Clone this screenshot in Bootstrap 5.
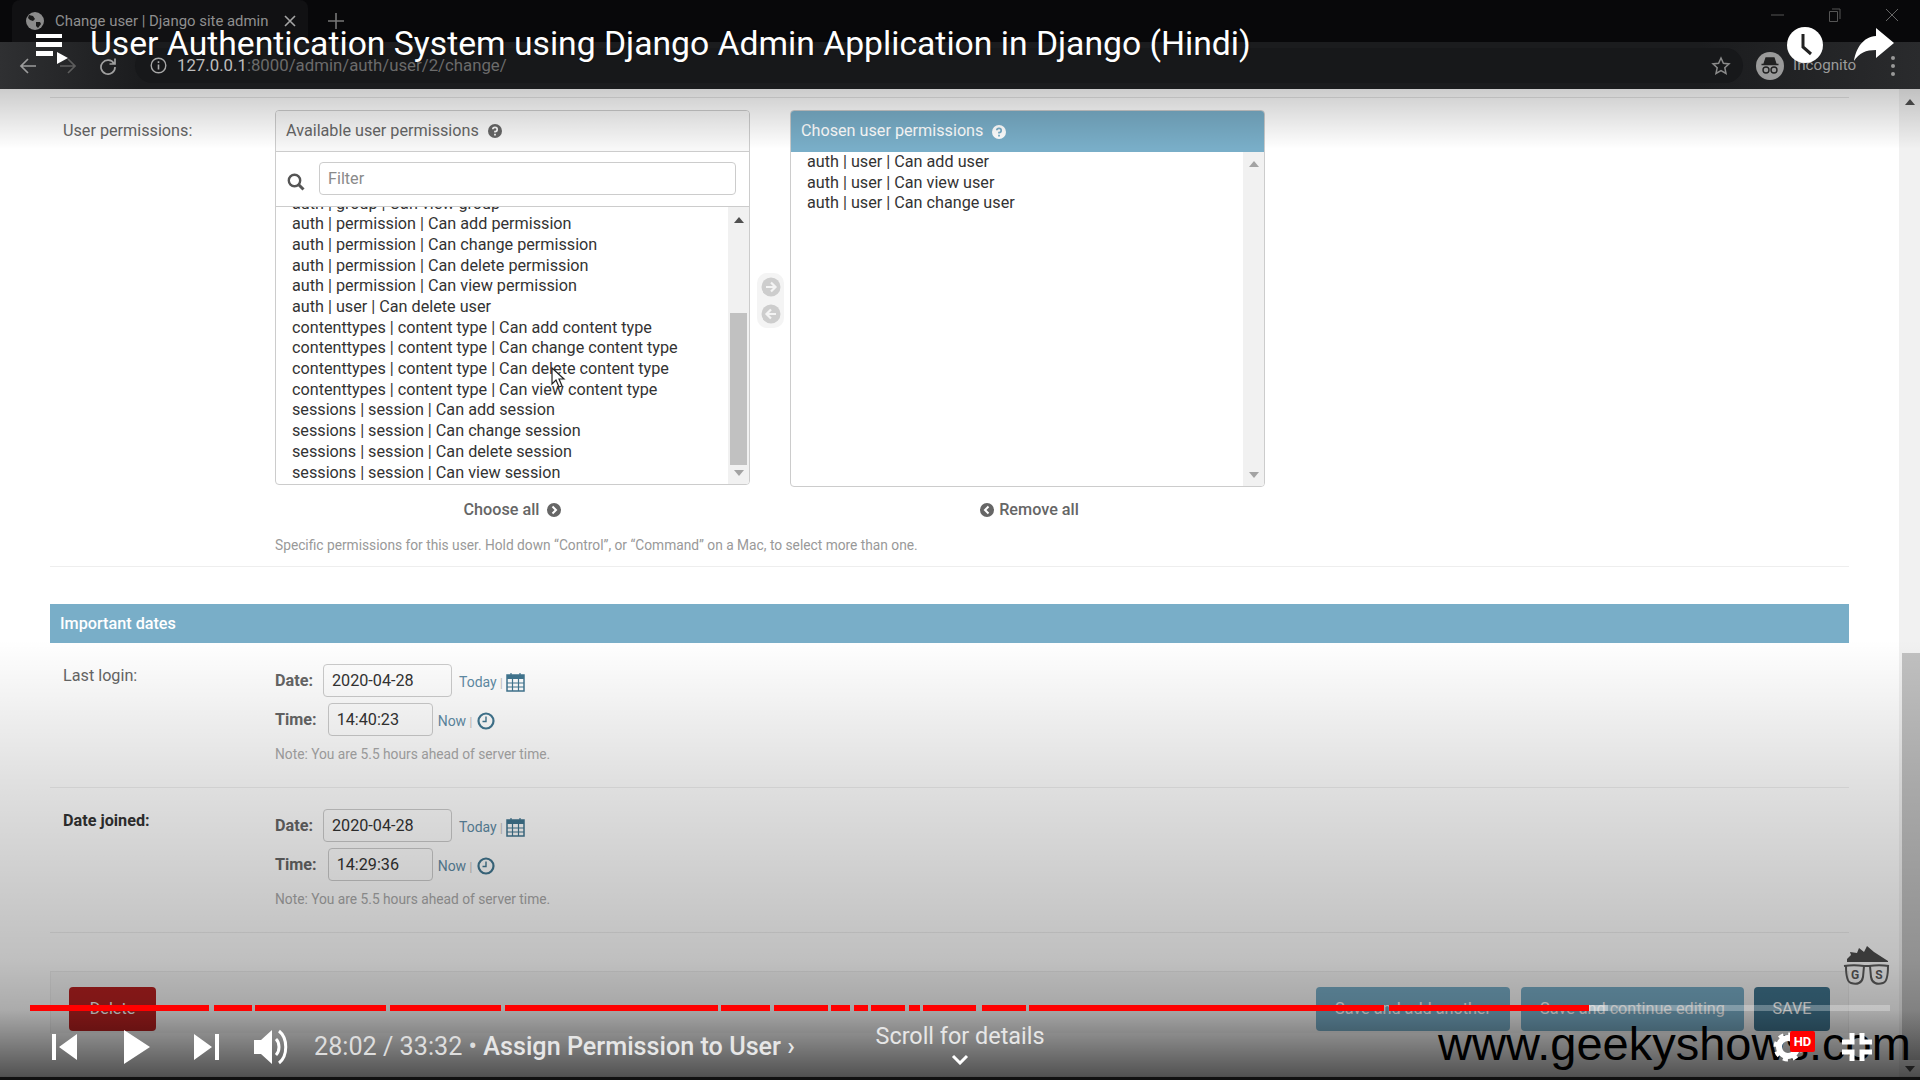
<!DOCTYPE html>
<html lang="en">
<head>
  <meta charset="UTF-8">
  <title>User Authentication System using Django Admin Application in Django (Hindi)</title>
  <meta name="viewport" content="width=device-width, initial-scale=1.0">
  <link rel="stylesheet" href="https://cdn.jsdelivr.net/npm/bootstrap@5.3.0/dist/css/bootstrap.min.css">
  <style>
    html, body { height: 100%; margin: 0; overflow: hidden; }
    body { font-family: Roboto, "Liberation Sans", sans-serif; font-size: 16.2px; color: #333; background: #fff; }
    .frame { width: 1920px; height: 1080px; position: relative; overflow: hidden; }

    /* browser chrome */
    .chrome { height: 89px; background: linear-gradient(90deg, #2f3032 0, #1b1c1e 140px, #1b1c1e 1700px, #2a2b2d 100%); }
    .tabrow { height: 42px; background: #08080a; color: #8f8f8f; font-size: 14.9px; }
    .tabshape { width: 296px; height: 42px; margin-left: 12px; padding-left: 14px; padding-right: 12px; background: #111113; border-radius: 8px 8px 0 0; }
    .tabtitle { margin-left: 11px; flex: 1; white-space: nowrap; }
    .tabplus { margin-left: 20px; }
    .winbtns { margin-left: auto; padding-right: 21px; gap: 43px; height: 30px; }
    .navrow { height: 47px; padding-left: 19px; }
    .navicons { width: 116px; gap: 22px; }
    .omni { width: 1608px; height: 35px; background: #17181a; border-radius: 18px; padding: 0 12px 0 15px; font-size: 16.8px; color: #6b6b6b; }
    .omni b { font-weight: 400; color: #bdbdbd; }
    .urltext { margin-left: 10px; }
    .incog { margin-left: 13px; color: #9a9a9a; font-size: 15.2px; gap: 9px; }
    .menu-dots { margin-left: 34px; }

    /* admin page */
    .pagebody { height: 991px; }
    .adminmain { width: 1899px; padding: 8px 50px 0 50px; }
    .formrow { border-bottom: 1px solid #eee; }
    .toprule { border-top: 1px solid #e4e4e4; padding-top: 12px; padding-bottom: 11px; }
    .rowlabel { width: 225px; padding-left: 13px; color: #666; flex: none; }
    .permrow-label { padding-top: 9px; }
    .selbox { width: 475px; }
    .selframe { border: 1px solid #ccc; border-radius: 4px; overflow: hidden; background: #fff; }
    .selhead { height: 41px; padding-left: 10px; color: #666; gap: 9px; border-bottom: 1px solid #ccc; background: #f8f8f8; }
    .selhead-blue { background: #79aec8; color: #fff; border: 0; padding-left: 10px; }
    .filterbar { height: 55px; padding: 10px 13px 0 11px; gap: 14px; border-bottom: 1px solid #ccc; align-items: flex-start; }
    .filterbar svg { margin-top: 11px; }
    .filterinput.form-control { height: 33px; font-size: 16.2px; padding: 0 8px; border-color: #ccc; border-radius: 4px; color: #333; font-family: inherit; }
    .filterinput::placeholder { color: #8a8a8a; opacity: 1; }
    .listarea { height: 277px; }
    .listarea-tall { height: 334px; }
    .listinner { overflow: hidden; padding-left: 16px; margin: 0; list-style: none; line-height: 20.7px; color: #333; white-space: nowrap; }
    .listinner li { height: 20.7px; }
    .listshift { margin-top: -13.4px; }
    .fakebar { width: 21px; flex: none; background: #f1f1f1; padding: 0 2px; }
    .sbup, .sbdown { width: 0; height: 0; margin: 0 auto; border-left: 5px solid transparent; border-right: 5px solid transparent; }
    .sbup { border-bottom: 6px solid #505050; margin-top: 10px; }
    .sbdown { border-top: 6px solid #505050; margin-bottom: 8px; }
    .sbup-dim { border-bottom-color: #a3a3a3; margin-top: 9px; }
    .sbdown-dim { border-top-color: #a3a3a3; }
    .sbthumb { height: 152px; background: #c1c1c1; margin-top: auto; margin-bottom: 5px; }
    .midwrap { width: 40px; padding-top: 163px; }
    .midpill { width: 27px; height: 55px; margin-left: 7px; background: #f4f4f4; border-radius: 10px; gap: 7px; padding-top: 4px; }
    .sellink { font-weight: 500; color: #666; line-height: 20px; gap: 8px; }
    .sellink-a { margin-top: 15px; }
    .sellink-b { margin-top: 13px; gap: 5px; padding-left: 4px; }
    .helpline { margin: 15px 0 0 225px; font-size: 13.76px; line-height: 20px; color: #999; }
    .sectionbar { height: 39px; margin-top: 37px; padding-left: 10px; padding-top: 1px; background: #79aec8; color: #fff; font-weight: 500; }
    .daterow { padding-top: 21px; padding-bottom: 23px; }
    .dlabel { font-weight: 700; color: #666; margin-right: 10px; position: relative; top: 1px; }
    .dlabel-time { margin-right: 11px; }
    .dline { height: 33px; gap: 0; }
    .dline + .dline { margin-top: 6px; }
    .dateinput.form-control { height: 33px; padding: 0 8px; font-size: 16.2px; color: #333; border-color: #ccc; border-radius: 4px; font-family: inherit; background: #fff; }
    .w-date { width: 129px; padding-left: 9px; }
    .w-time { width: 105px; }
    .shortcut { color: #5f8ca6; font-size: 14px; margin-left: 7px; position: relative; top: 2px; }
    .shortcut-now { margin-left: 5px; }
    .sepbar { color: #c5c5c5; font-size: 13px; margin: 0 4px 0 3px; position: relative; top: 2px; }
    .sepbar-now { margin-right: 6px; }
    .tool-ico { position: relative; top: 1px; margin-left: -1px; }
    .tznote { font-size: 13.75px; line-height: 20px; color: #aaa; margin-top: 8px; }
    .rowtitle-bold { font-weight: 700; color: #333; }
    .submitbar { margin-top: 38px; height: 62px; padding: 15px 18px 0 18px; background: #f8f8f8; border: 1px solid #eee; border-bottom: 0; }
    .act.btn { height: 44px; border: 0; border-radius: 4px; font-size: 16.2px; color: #fff; padding: 0; font-family: inherit; }
    .act-del { width: 87px; background: #ba2121; }
    .act-light { background: #79aec8; }
    .act-another { width: 194px; margin-left: auto; }
    .act-continue { width: 223px; margin-left: 11px; }
    .act-save { width: 76px; margin-left: 10px; background: #417690; }
    .pagebar { width: 21px; background: #f1f1f1; }
    .pagebar-thumb { height: 407px; margin-top: auto; margin-bottom: 6px; background: #c1c1c1; margin-left: 3px; }

    /* video player layer on top of the page */
    .yt-layer { position: absolute; inset: 0; pointer-events: none; color: #fff; }
    .shade-top { position: absolute; left: 0; right: 0; top: 89px; height: 60px; background: linear-gradient(rgba(0,0,0,.2), rgba(0,0,0,0)); }
    .shade-bottom { position: absolute; left: 0; right: 0; top: 640px; height: 440px; background: linear-gradient(rgba(0,0,0,0) 0, rgba(0,0,0,.12) 32%, rgba(0,0,0,.25) 73%, rgba(0,0,0,.33) 84%, rgba(0,0,0,.68) 99.2%, #111 99.3%); }
    .yt-title { position: absolute; left: 36px; top: 20px; gap: 22px; }
    .yt-title span { font-size: 33.7px; line-height: 48px; white-space: nowrap; text-shadow: 0 0 2px rgba(0,0,0,.4); }
    .yt-watch { position: absolute; left: 1787px; top: 27px; }
    .yt-share { position: absolute; left: 1853px; top: 28px; }
    .yt-pointer { position: absolute; left: 551px; top: 367px; }
    .gs-logo { position: absolute; left: 1843px; top: 945px; }
    .progress-track { position: absolute; left: 30px; top: 1005px; width: 1860px; height: 6px; background: linear-gradient(90deg, transparent 0, transparent 1559px, rgba(255,255,255,.55) 1559px, rgba(255,255,255,.55) 1578px, rgba(255,255,255,.28) 1578px); }
    .progress-track i { display: block; height: 6px; background: #f00; flex: none; }
    .yt-controls { position: absolute; left: 52px; top: 1030px; height: 34px; }
    .ctl-play { margin-left: 46px; }
    .ctl-next { margin-left: 44px; }
    .ctl-vol { margin-left: 34px; }
    .yt-clock { margin-left: 22px; font-size: 25.2px; color: #ddd; white-space: nowrap; }
    .yt-clock b { font-weight: 500; color: #e6e6e6; }
    .yt-scroll { position: absolute; left: 760px; width: 400px; top: 1019px; font-size: 23.4px; color: #e6e6e6; }
    .yt-brand { position: absolute; left: 1438px; top: 1016px; font-family: "Liberation Sans", Arial, sans-serif; font-size: 47px; line-height: 56px; color: #000; white-space: nowrap; }
    .yt-gear { position: absolute; left: 1773px; top: 1032px; }
    .yt-hd { position: absolute; left: 1790px; top: 1031px; width: 25px; height: 21px; background: #f00; font-size: 13px; font-weight: 700; line-height: 21px; text-align: center; border-radius: 2px; }
    .yt-full { position: absolute; left: 1842px; top: 1032px; }
  </style>
</head>
<body>
<div class="frame">

  <!-- browser chrome -->
  <div class="chrome d-flex flex-column">
    <div class="tabrow d-flex align-items-start">
      <div class="tabshape d-flex align-items-center">
        <svg width="18" height="18" viewBox="0 0 18 18"><circle cx="9" cy="9" r="9" fill="#8b8b8b"/><path d="M3 3l4 1 2 3-2 2-3-1-2-2zM10 10l4 0 1 2-3 4-2-2z" fill="#1a1a1a"/></svg>
        <span class="tabtitle">Change user | Django site admin</span>
        <svg width="12" height="12" viewBox="0 0 12 12"><path d="M1 1l10 10M11 1L1 11" stroke="#a5a5a5" stroke-width="1.6"/></svg>
      </div>
      <svg class="tabplus mt-2" width="16" height="26" viewBox="0 0 16 26"><path d="M8 5v16M0 13h16" stroke="#777" stroke-width="1.6"/></svg>
      <div class="winbtns d-flex align-items-center">
        <svg width="15" height="12" viewBox="0 0 15 12"><path d="M1 6h13" stroke="#555" stroke-width="1"/></svg>
        <svg width="14" height="14" viewBox="0 0 14 14"><path d="M4 1h8v10M1.500 3.500h8v10h-8z" fill="none" stroke="#555" stroke-width="1"/></svg>
        <svg width="14" height="14" viewBox="0 0 14 14"><path d="M1 1l12 12M13 1L1 13" stroke="#666" stroke-width="1"/></svg>
      </div>
    </div>
    <div class="navrow d-flex align-items-center">
      <div class="navicons d-flex align-items-center">
        <svg width="18" height="18" viewBox="0 0 18 18"><path d="M17 9H2M9 2L2 9l7 7" fill="none" stroke="#9c9c9c" stroke-width="1.700"/></svg>
        <svg width="18" height="18" viewBox="0 0 18 18"><path d="M1 9h15M9 2l7 7-7 7" fill="none" stroke="#5d5d5d" stroke-width="1.700"/></svg>
        <svg width="18" height="18" viewBox="0 0 18 18"><path d="M15 6.500A7 7 0 1 0 16 10M16 1.500v5.500h-5.500" fill="none" stroke="#a0a0a0" stroke-width="1.700"/></svg>
      </div>
      <div class="omni d-flex align-items-center">
        <svg width="17" height="17" viewBox="0 0 17 17"><circle cx="8.500" cy="8.500" r="7.300" fill="none" stroke="#a8a8a8" stroke-width="1.400"/><path d="M8.500 7.500v5M8.500 4.200v1.800" stroke="#a8a8a8" stroke-width="1.600"/></svg>
        <span class="urltext"><b>127.0.0.1</b>:8000/admin/auth/user/2/change/</span>
        <svg class="ms-auto" width="20" height="20" viewBox="0 0 20 20"><path d="M10 2l2.400 5.300 5.600.6-4.200 3.800 1.200 5.700L10 14.500l-5 2.900 1.200-5.700L2 7.900l5.600-.6z" fill="none" stroke="#8a8a8a" stroke-width="1.500"/></svg>
      </div>
      <div class="incog d-flex align-items-center">
        <svg width="28" height="28" viewBox="0 0 28 28"><circle cx="14" cy="14" r="14" fill="#9a9a9a"/><path d="M8 12l2-6h8l2 6zM5.500 12.500h17" fill="#222" stroke="#222" stroke-width="1.300"/><circle cx="10" cy="18" r="3" fill="none" stroke="#222" stroke-width="1.400"/><circle cx="18" cy="18" r="3" fill="none" stroke="#222" stroke-width="1.400"/></svg>
        <span>Incognito</span>
      </div>
      <svg class="menu-dots" width="6" height="22" viewBox="0 0 6 22"><circle cx="3" cy="3" r="2" fill="#999"/><circle cx="3" cy="11" r="2" fill="#999"/><circle cx="3" cy="19" r="2" fill="#999"/></svg>
    </div>
  </div>

  <!-- django admin page -->
  <div class="pagebody d-flex">
    <div class="adminmain">
      <div class="formrow toprule">
        <div class="d-flex">
          <div class="rowlabel permrow-label">User permissions:</div>
          <div class="selbox d-flex flex-column">
            <div class="selframe">
              <div class="selhead d-flex align-items-center">
                Available user permissions
                <svg width="14" height="14" viewBox="0 0 14 14"><circle cx="7" cy="7" r="7" fill="#666"/><path d="M4.800 5.300A2.200 2.100 0 1 1 7 7.500v1" fill="none" stroke="#f8f8f8" stroke-width="1.700"/><path d="M7 9.800v1.800" stroke="#f8f8f8" stroke-width="1.800"/></svg>
              </div>
              <div class="filterbar d-flex">
                <svg width="18" height="18" viewBox="0 0 18 18" class="flex-shrink-0"><circle cx="7.500" cy="7.500" r="5.700" fill="none" stroke="#555" stroke-width="2.400"/><path d="M11.500 11.500l5 5" stroke="#555" stroke-width="3"/></svg>
                <input class="form-control filterinput" type="text" placeholder="Filter">
              </div>
              <div class="listarea d-flex">
                <ul class="listinner flex-grow-1">
                  <li class="listshift">auth | group | Can view group</li>
                  <li>auth | permission | Can add permission</li>
                  <li>auth | permission | Can change permission</li>
                  <li>auth | permission | Can delete permission</li>
                  <li>auth | permission | Can view permission</li>
                  <li>auth | user | Can delete user</li>
                  <li>contenttypes | content type | Can add content type</li>
                  <li>contenttypes | content type | Can change content type</li>
                  <li>contenttypes | content type | Can delete content type</li>
                  <li>contenttypes | content type | Can view content type</li>
                  <li>sessions | session | Can add session</li>
                  <li>sessions | session | Can change session</li>
                  <li>sessions | session | Can delete session</li>
                  <li>sessions | session | Can view session</li>
                </ul>
                <div class="fakebar d-flex flex-column">
                  <div class="sbup"></div>
                  <div class="sbthumb"></div>
                  <div class="sbdown sbdown-dim"></div>
                </div>
              </div>
            </div>
            <div class="sellink sellink-a d-flex align-items-center justify-content-center">
              Choose all
              <svg width="14" height="14" viewBox="0 0 14 14"><circle cx="7" cy="7" r="7" fill="#666"/><path d="M5.500 3.500L9 7l-3.500 3.500" fill="none" stroke="#fff" stroke-width="2"/></svg>
            </div>
          </div>
          <div class="midwrap">
            <div class="midpill d-flex flex-column align-items-center">
              <svg width="20" height="20" viewBox="0 0 20 20"><circle cx="10" cy="10" r="9.500" fill="#cdcdcd"/><path d="M5 10h9M10 5.500l4.500 4.500-4.500 4.500" fill="none" stroke="#f4f4f4" stroke-width="2.200"/></svg>
              <svg width="20" height="20" viewBox="0 0 20 20"><circle cx="10" cy="10" r="9.500" fill="#cdcdcd"/><path d="M15 10H6M10 5.500L5.500 10l4.500 4.500" fill="none" stroke="#f4f4f4" stroke-width="2.200"/></svg>
            </div>
          </div>
          <div class="selbox d-flex flex-column">
            <div class="selframe">
              <div class="selhead selhead-blue d-flex align-items-center">
                Chosen user permissions
                <svg width="14" height="14" viewBox="0 0 14 14"><circle cx="7" cy="7" r="7" fill="#fff"/><path d="M4.800 5.300A2.200 2.100 0 1 1 7 7.500v1" fill="none" stroke="#79aec8" stroke-width="1.700"/><path d="M7 9.800v1.800" stroke="#79aec8" stroke-width="1.800"/></svg>
              </div>
              <div class="listarea-tall d-flex">
                <ul class="listinner flex-grow-1">
                  <li>auth | user | Can add user</li>
                  <li>auth | user | Can view user</li>
                  <li>auth | user | Can change user</li>
                </ul>
                <div class="fakebar d-flex flex-column justify-content-between">
                  <div class="sbup sbup-dim"></div>
                  <div class="sbdown sbdown-dim"></div>
                </div>
              </div>
            </div>
            <div class="sellink sellink-b d-flex align-items-center justify-content-center">
              <svg width="14" height="14" viewBox="0 0 14 14"><circle cx="7" cy="7" r="7" fill="#666"/><path d="M8.500 3.500L5 7l3.500 3.500" fill="none" stroke="#fff" stroke-width="2"/></svg>
              Remove all
            </div>
          </div>
        </div>
        <div class="helpline">Specific permissions for this user. Hold down “Control”, or “Command” on a Mac, to select more than one.</div>
      </div>

      <div class="sectionbar d-flex align-items-center">Important dates</div>

      <div class="formrow daterow d-flex">
        <div class="rowlabel">Last login:</div>
        <div>
          <div class="dline d-flex align-items-center">
            <span class="dlabel">Date:</span>
            <input class="form-control dateinput w-date" type="text" value="2020-04-28">
            <span class="shortcut">Today</span><span class="sepbar">|</span>
            <svg class="tool-ico" width="19" height="20" viewBox="0 0 19 20"><rect x="1" y="3" width="17" height="16" fill="none" stroke="#417690" stroke-width="1.500"/><rect x="1" y="3" width="17" height="4" fill="#417690"/><path d="M5 1v4M14 1v4M1 11h17M1 15h17M6.500 7v12M12.500 7v12" stroke="#417690" stroke-width="1.200"/></svg>
          </div>
          <div class="dline d-flex align-items-center">
            <span class="dlabel dlabel-time">Time:</span>
            <input class="form-control dateinput w-time" type="text" value="14:40:23">
            <span class="shortcut shortcut-now">Now</span><span class="sepbar sepbar-now">|</span>
            <svg class="tool-ico" width="18" height="18" viewBox="0 0 18 18"><circle cx="9" cy="9" r="7.500" fill="none" stroke="#417690" stroke-width="2.200"/><path d="M9 4.500V9.500H5.500" fill="none" stroke="#417690" stroke-width="1.400"/></svg>
          </div>
          <div class="tznote">Note: You are 5.5 hours ahead of server time.</div>
        </div>
      </div>

      <div class="formrow daterow d-flex">
        <div class="rowlabel rowtitle-bold">Date joined:</div>
        <div>
          <div class="dline d-flex align-items-center">
            <span class="dlabel">Date:</span>
            <input class="form-control dateinput w-date" type="text" value="2020-04-28">
            <span class="shortcut">Today</span><span class="sepbar">|</span>
            <svg class="tool-ico" width="19" height="20" viewBox="0 0 19 20"><rect x="1" y="3" width="17" height="16" fill="none" stroke="#417690" stroke-width="1.500"/><rect x="1" y="3" width="17" height="4" fill="#417690"/><path d="M5 1v4M14 1v4M1 11h17M1 15h17M6.500 7v12M12.500 7v12" stroke="#417690" stroke-width="1.200"/></svg>
          </div>
          <div class="dline d-flex align-items-center">
            <span class="dlabel dlabel-time">Time:</span>
            <input class="form-control dateinput w-time" type="text" value="14:29:36">
            <span class="shortcut shortcut-now">Now</span><span class="sepbar sepbar-now">|</span>
            <svg class="tool-ico" width="18" height="18" viewBox="0 0 18 18"><circle cx="9" cy="9" r="7.500" fill="none" stroke="#417690" stroke-width="2.200"/><path d="M9 4.500V9.500H5.500" fill="none" stroke="#417690" stroke-width="1.400"/></svg>
          </div>
          <div class="tznote">Note: You are 5.5 hours ahead of server time.</div>
        </div>
      </div>

      <div class="submitbar d-flex align-items-start">
        <button class="btn act act-del" type="button">Delete</button>
        <button class="btn act act-light act-another" type="button">Save and add another</button>
        <button class="btn act act-light act-continue" type="button">Save and continue editing</button>
        <button class="btn act act-save" type="button">SAVE</button>
      </div>
    </div>
    <div class="pagebar d-flex flex-column">
      <div class="sbup"></div>
      <div class="pagebar-thumb"></div>
      <div class="sbdown"></div>
    </div>
  </div>

  <!-- video player overlay -->
  <div class="yt-layer">
    <div class="shade-top"></div>
    <div class="shade-bottom"></div>

    <div class="yt-title d-flex align-items-center">
      <svg width="32" height="48" viewBox="0 0 32 48"><path d="M0 14h26v4H0zM0 22h26v5H0zM0 31h17v5H0z" fill="#fff"/><path d="M21 32l11 6-11 6z" fill="#fff"/></svg>
      <span>User Authentication System using Django Admin Application in Django (Hindi)</span>
    </div>
    <svg class="yt-watch" width="36" height="36" viewBox="0 0 36 36"><circle cx="18" cy="18" r="18" fill="#fff"/><path d="M16 7v13l8 7" fill="none" stroke="#222" stroke-width="3"/></svg>
    <svg class="yt-share" width="42" height="34" viewBox="0 0 42 34"><path d="M23 0l18 15-18 15v-8C13 22 6 25 1 33 3 20 10 9 23 8z" fill="#fff"/></svg>

    <svg class="yt-pointer" width="15" height="22" viewBox="0 0 15 22"><path d="M1 1v16l4-4 3 7 3-1-3-7h5z" fill="#fff" stroke="#222" stroke-width="1.200"/></svg>

    <svg class="gs-logo" width="48" height="42" viewBox="0 0 48 42">
      <path d="M4 14l4-4-1-3 7 1 2-5 5 4 3-6 7 6 14 9 0 1H4z" fill="#3a3a3a"/>
      <path d="M1 21c6-1 14-1 20 0h5c6-1 14-1 20 0" fill="none" stroke="#444" stroke-width="2"/>
      <path d="M3 21c0 8 1 16 5 17 6 2 11 0 12-6l1-11M45 21c0 8-1 16-5 17-6 2-11 0-12-6l-1-11" fill="none" stroke="#444" stroke-width="2"/>
      <text x="12" y="34" font-size="12" font-weight="700" text-anchor="middle" fill="#444" font-family="Roboto, sans-serif">G</text>
      <text x="36" y="34" font-size="12" font-weight="700" text-anchor="middle" fill="#444" font-family="Roboto, sans-serif">S</text>
    </svg>

    <div class="progress-track d-flex" id="ytProgress"></div>

    <div class="yt-controls d-flex align-items-center">
      <svg width="26" height="30" viewBox="0 0 26 30"><path d="M0 2h4v26H0zM25 2v26L7 15z" fill="#fff"/></svg>
      <svg class="ctl-play" width="26" height="34" viewBox="0 0 26 34"><path d="M0 0l26 17L0 34z" fill="#fff"/></svg>
      <svg class="ctl-next" width="26" height="30" viewBox="0 0 26 30"><path d="M0 2l18 13L0 28zM21 2h4v26h-4z" fill="#fff"/></svg>
      <svg class="ctl-vol" width="38" height="38" viewBox="0 0 38 38"><path d="M0 12h7L18 2v34L7 26H0z" fill="#fff"/><path d="M22 11c4 4 4 12 0 16M25 3c9 7 9 25 0 32" fill="none" stroke="#fff" stroke-width="3"/></svg>
      <div class="yt-clock">28:02 / 33:32 • <b>Assign Permission to User ›</b></div>
    </div>

    <div class="yt-scroll text-center">
      Scroll for details
      <div class="d-flex justify-content-center"><svg width="18" height="11" viewBox="0 0 18 11"><path d="M2 2l7 7 7-7" fill="none" stroke="#fff" stroke-width="3"/></svg></div>
    </div>

    <div class="yt-brand">www.geekyshows.com</div>
    <svg class="yt-gear" width="30" height="30" viewBox="0 0 30 30"><circle cx="15" cy="15" r="9" fill="none" stroke="#fff" stroke-width="6"/><circle cx="15" cy="15" r="12.500" fill="none" stroke="#fff" stroke-width="4" stroke-dasharray="5 4.800"/></svg>
    <div class="yt-hd">HD</div>
    <svg class="yt-full" width="30" height="30" viewBox="0 0 30 30"><path d="M10 1v9H0M20 1v9h10M10 29v-9H0M20 29v-9h10" fill="none" stroke="#fff" stroke-width="5"/></svg>
  </div>
</div>

<script>
  // chapter segments of the progress bar, as [start, end] in page px
  const chapters = [[30,209],[214,252],[255,386],[390,501],[505,718],[721,770],[774,828],[831,850],[854,868],[871,905],[909,920],[923,976],[982,1026],[1029,1384],[1389,1589]];
  const track = document.getElementById('ytProgress');
  let last = 30;
  chapters.forEach(function (c) {
    const seg = document.createElement('i');
    seg.style.marginLeft = (c[0] - last) + 'px';
    seg.style.width = (c[1] - c[0]) + 'px';
    track.appendChild(seg);
    last = c[1];
  });
</script>
<script src="https://cdn.jsdelivr.net/npm/bootstrap@5.3.0/dist/js/bootstrap.bundle.min.js"></script>
</body>
</html>
